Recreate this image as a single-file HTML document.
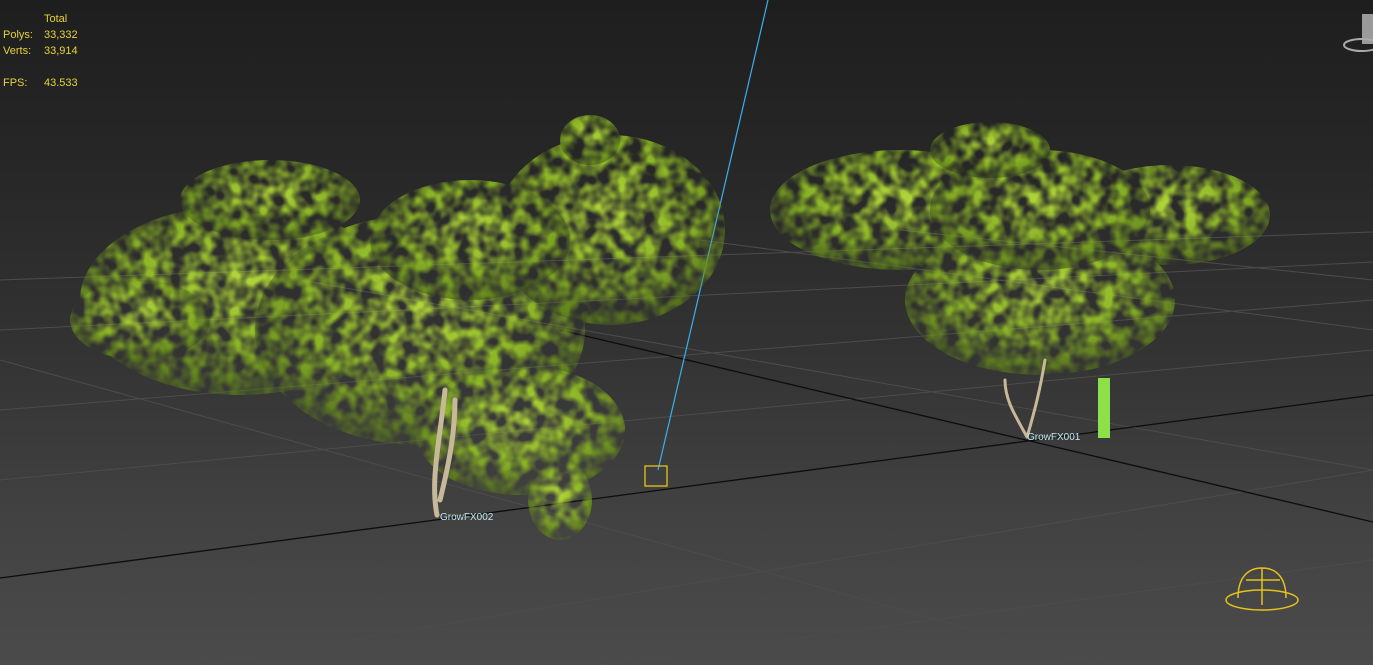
<!DOCTYPE html>
<html><head><meta charset="utf-8"><style>
html,body{margin:0;padding:0;width:1373px;height:665px;overflow:hidden}
body{background:linear-gradient(#1e1e1e 0px,#262626 150px,#333 350px,#424242 520px,#4b4b4b 665px);position:relative;font-family:"Liberation Sans",sans-serif}
.st{position:absolute;color:#e6d23a;font-size:11px;line-height:16px}
svg{position:absolute;left:0;top:0}
</style></head><body>
<svg width="1373" height="665" viewBox="0 0 1373 665">
<defs>
<radialGradient id="g" cx="50%" cy="40%" r="60%"><stop offset="0" stop-color="#b2d63a"/><stop offset=".6" stop-color="#8ab325"/><stop offset="1" stop-color="#56761a" stop-opacity=".8"/></radialGradient>
<filter id="leaf"><feTurbulence type="fractalNoise" baseFrequency=".07" numOctaves="2" seed="5"/><feColorMatrix values="0 0 0 0 0 0 0 0 0 0 0 0 0 0 0 0 0 0 -2.4 1.65"/><feComposite in="SourceGraphic" operator="in"/></filter>
</defs>
<g stroke="#4c4c4c" stroke-width="1" fill="none">
<line x1="0" y1="280" x2="1373" y2="232"/><line x1="0" y1="330" x2="1373" y2="262"/>
<line x1="0" y1="410" x2="1373" y2="300"/><line x1="0" y1="480" x2="1373" y2="350"/>
<line x1="200" y1="665" x2="1373" y2="470"/><line x1="600" y1="665" x2="1373" y2="560"/>
<line x1="0" y1="360" x2="1100" y2="665"/><line x1="300" y1="280" x2="1373" y2="470"/>
<line x1="700" y1="240" x2="1373" y2="330"/><line x1="900" y1="230" x2="1373" y2="280"/>
</g>
<g stroke="#0d0d0d" stroke-width="1.3"><line x1="0" y1="578" x2="1373" y2="395"/><line x1="560" y1="330" x2="1373" y2="522"/></g>
<line x1="768" y1="0" x2="658" y2="470" stroke="#3ab0f0" stroke-width="1.2"/>
<g filter="url(#leaf)">
<ellipse cx="240" cy="300" rx="160" ry="95" fill="url(#g)"/>
<ellipse cx="140" cy="320" rx="70" ry="40" fill="url(#g)"/>
<ellipse cx="420" cy="330" rx="165" ry="115" fill="url(#g)"/>
<ellipse cx="610" cy="230" rx="115" ry="95" fill="url(#g)"/>
<ellipse cx="470" cy="240" rx="100" ry="60" fill="url(#g)"/>
<ellipse cx="520" cy="430" rx="105" ry="65" fill="url(#g)"/>
<ellipse cx="270" cy="200" rx="90" ry="40" fill="url(#g)"/>
<ellipse cx="560" cy="500" rx="32" ry="40" fill="url(#g)"/>
<ellipse cx="590" cy="140" rx="30" ry="25" fill="url(#g)"/>
<ellipse cx="900" cy="210" rx="130" ry="60" fill="url(#g)"/>
<ellipse cx="1170" cy="215" rx="100" ry="50" fill="url(#g)"/>
<ellipse cx="1040" cy="300" rx="135" ry="75" fill="url(#g)"/>
<ellipse cx="1040" cy="210" rx="110" ry="60" fill="url(#g)"/>
<ellipse cx="990" cy="150" rx="60" ry="28" fill="url(#g)"/>
</g>
<g stroke="#c8b89a" stroke-width="5" fill="none" stroke-linecap="round">
<path d="M437 515 C430 480 440 440 445 390 M440 500 C450 460 455 430 455 400"/>
<path d="M1027 437 C1015 415 1005 400 1005 380 M1027 437 C1035 410 1040 390 1045 360" stroke-width="3"/>
</g>
<rect x="1098" y="378" width="12" height="60" fill="#8ce04a"/>
<rect x="645" y="466" width="22" height="20" fill="none" stroke="#e6c21a" stroke-width="1.3"/>
<g fill="none" stroke="#e6c21a" stroke-width="1.5"><ellipse cx="1262" cy="600" rx="36" ry="10"/><path d="M1238 598 C1238 575 1250 568 1262 568 C1274 568 1286 575 1286 598 M1262 568 L1262 605 M1246 580 L1280 580"/></g>
<rect x="1362" y="14" width="11" height="30" fill="#9a9a9a"/>
<ellipse cx="1362" cy="45" rx="18" ry="6" fill="none" stroke="#aaa" stroke-width="2"/>
<text x="440" y="520" fill="#bfe6ef" font-size="10" font-family="Liberation Sans">GrowFX002</text>
<text x="1027" y="440" fill="#bfe6ef" font-size="10" font-family="Liberation Sans">GrowFX001</text>
</svg>
<div class="st" style="left:44px;top:11px">Total</div>
<div class="st" style="left:3px;top:27px">Polys:</div><div class="st" style="left:44px;top:27px">33,332</div>
<div class="st" style="left:3px;top:43px">Verts:</div><div class="st" style="left:44px;top:43px">33,914</div>
<div class="st" style="left:3px;top:75px">FPS:</div><div class="st" style="left:44px;top:75px">43.533</div>
</body></html>
